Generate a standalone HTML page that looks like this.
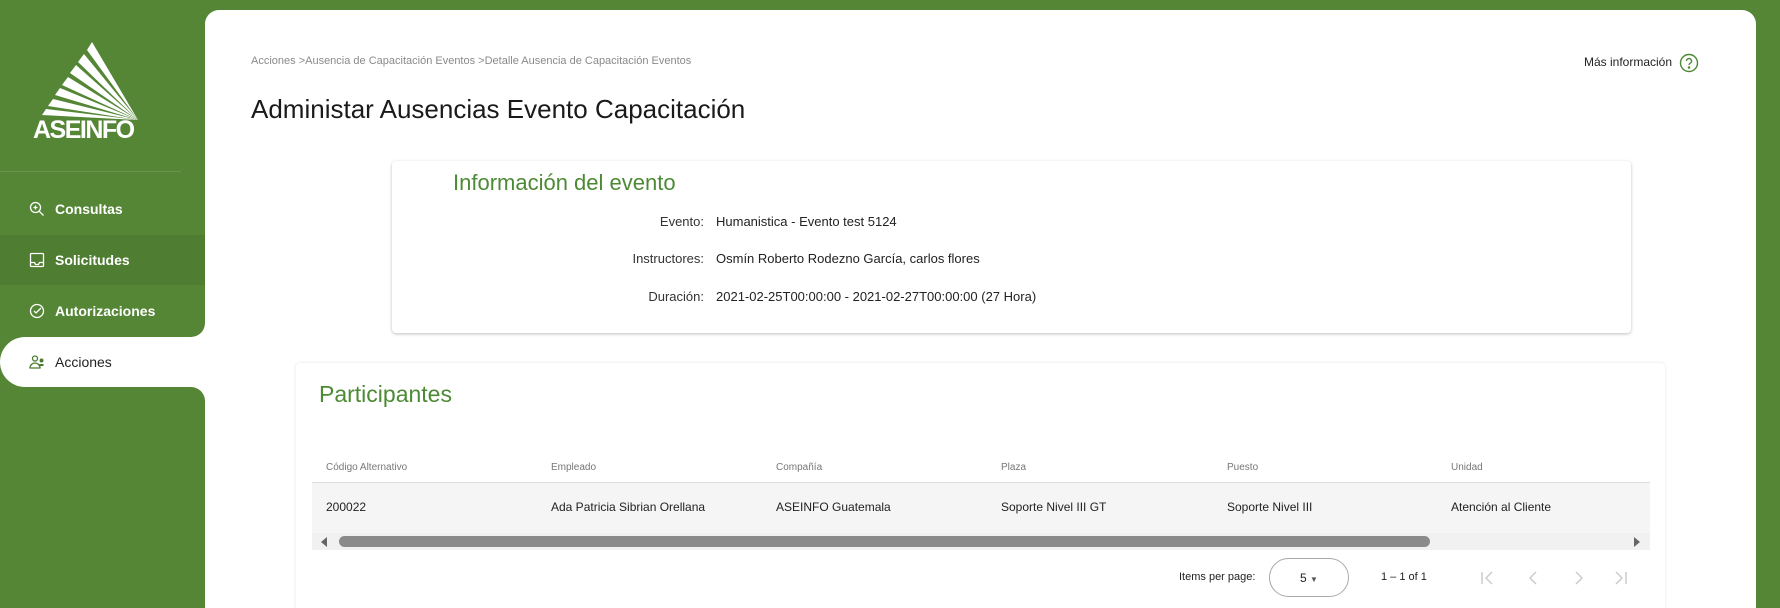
<!DOCTYPE html>
<html><head><meta charset="utf-8"><style>
*{margin:0;padding:0;box-sizing:border-box}
html,body{width:1780px;height:608px;overflow:hidden}
body{background:#558636;font-family:"Liberation Sans",sans-serif;position:relative}
.abs{position:absolute;white-space:nowrap}
.nav{position:absolute;left:0;width:205px;height:50px;color:#fff;font-size:14px;font-weight:bold;display:flex;align-items:center;padding-left:55px}
.nav svg{position:absolute;left:29px}
.card{position:absolute;background:#fff;border-radius:14px 14px 0 0;left:205px;top:10px;width:1551px;height:598px}
.th{position:absolute;top:462px;font-size:10px;color:#777}
.td{position:absolute;top:500px;font-size:12px;color:#222}
.lbl{position:absolute;font-size:13px;color:#333;text-align:right;width:200px;left:504px}
.val{position:absolute;font-size:13px;color:#222;left:716px}
</style></head><body>
<svg class="abs" style="left:30px;top:38px" width="120" height="110" viewBox="30 38 120 110">
<g fill="#fff">
<polygon points="92,42 87,50 138,120"/>
<polygon points="84,54 78,62 138,120"/>
<polygon points="76,65 70,73 138,120"/>
<polygon points="68,77 62,85 138,120"/>
<polygon points="60,88 55,95 138,120"/>
<polygon points="53,99 48,106 138,120"/>
<polygon points="46,109 42,115 138,120"/>
</g>
<text x="33" y="138" fill="#fff" font-size="25" font-weight="bold" font-family="Liberation Sans" letter-spacing="-1.5">ASEINFO</text>
</svg>
<div class="abs" style="left:0;top:171px;width:181px;height:1px;background:rgba(255,255,255,.12)"></div>
<div class="card"></div>
<div class="abs" style="left:180px;top:320px;width:30px;height:80px;background:#fff"></div>
<div class="nav" style="top:184px"><svg width="16" height="16" viewBox="0 0 16 16" fill="none" stroke="#fff" stroke-width="1.3"><circle cx="6.5" cy="6.5" r="5"/><path d="M10.2 10.2L14.5 14.5M6.5 4.5v4M4.5 6.5h4"/></svg>Consultas</div>
<div class="nav" style="top:235px;background:#4f7d31"><svg width="16" height="16" viewBox="0 0 16 16" fill="none" stroke="#fff" stroke-width="1.3"><rect x="1.5" y="1.5" width="13" height="13" rx="1"/><path d="M1.5 10.5h4l1 2h3l1-2h4"/></svg>Solicitudes</div>
<div class="nav" style="top:285px;height:52px;background:#558636;border-radius:0 0 14px 0"><svg width="16" height="16" viewBox="0 0 16 16" fill="none" stroke="#fff" stroke-width="1.3"><circle cx="8" cy="8" r="6.5"/><path d="M5 8l2 2 5-5"/></svg>Autorizaciones</div>
<div class="nav" style="top:337px;height:50px;width:215px;background:#fff;color:#222;font-weight:normal;border-radius:25px 0 0 25px"><svg width="16" height="16" viewBox="0 0 16 16" fill="none" stroke="#4a7a2e" stroke-width="1.3"><circle cx="6" cy="4.5" r="2.5"/><path d="M1 14c0-3 2.5-5 5-5s5 2 5 5z"/><circle cx="12.5" cy="6.5" r="1.3" fill="#4a7a2e"/><path d="M10.5 11h4" stroke-width="2"/></svg>Acciones</div>
<div class="abs" style="left:0;top:387px;width:205px;height:221px;background:#558636;border-radius:0 14px 0 0"></div>
<div class="abs" style="left:251px;top:55px;font-size:11px;color:#8a8a8a">Acciones &gt;Ausencia de Capacitación Eventos &gt;Detalle Ausencia de Capacitación Eventos</div>
<div class="abs" style="left:1584px;top:55px;font-size:12px;color:#222">Más información</div>
<svg class="abs" style="left:1679px;top:53px" width="20" height="20" viewBox="0 0 20 20" fill="none" stroke="#4d8a35" stroke-width="1.4"><circle cx="10" cy="10" r="8.5"/><path d="M7.5 8a2.5 2.5 0 1 1 3.5 2.3c-.7.4-1 .8-1 1.7"/><circle cx="10" cy="14.5" r=".6" fill="#4d8a35"/></svg>
<div class="abs" style="left:251px;top:94px;font-size:26px;color:#1a1a1a">Administar Ausencias Evento Capacitación</div>
<div class="abs" style="left:392px;top:161px;width:1239px;height:172px;background:#fff;border-radius:4px;box-shadow:0 1px 3px rgba(0,0,0,.25)"></div>
<div class="abs" style="left:453px;top:170px;font-size:22px;color:#4d8a35">Información del evento</div>
<div class="lbl" style="top:214px">Evento:</div><div class="val" style="top:214px">Humanistica - Evento test 5124</div>
<div class="lbl" style="top:251px">Instructores:</div><div class="val" style="top:251px">Osmín Roberto Rodezno García, carlos flores</div>
<div class="lbl" style="top:289px">Duración:</div><div class="val" style="top:289px">2021-02-25T00:00:00 - 2021-02-27T00:00:00 (27 Hora)</div>
<div class="abs" style="left:296px;top:363px;width:1369px;height:245px;background:#fff;border-radius:4px 4px 0 0;box-shadow:0 0 3px rgba(0,0,0,.12)"></div>
<div class="abs" style="left:319px;top:381px;font-size:23px;color:#4d8a35">Participantes</div>
<div class="th" style="left:326px">Código Alternativo</div><div class="th" style="left:551px">Empleado</div><div class="th" style="left:776px">Compañía</div><div class="th" style="left:1001px">Plaza</div><div class="th" style="left:1227px">Puesto</div><div class="th" style="left:1451px">Unidad</div>
<div class="abs" style="left:312px;top:482px;width:1338px;height:51px;background:#f5f5f5;border-top:1px solid #ddd"></div>
<div class="td" style="left:326px">200022</div><div class="td" style="left:551px">Ada Patricia Sibrian Orellana</div><div class="td" style="left:776px">ASEINFO Guatemala</div><div class="td" style="left:1001px">Soporte Nivel III GT</div><div class="td" style="left:1227px">Soporte Nivel III</div><div class="td" style="left:1451px">Atención al Cliente</div>
<div class="abs" style="left:312px;top:533px;width:1338px;height:17px;background:#f1f1f1"></div>
<div class="abs" style="left:339px;top:536px;width:1091px;height:11px;background:#8a8a8a;border-radius:6px"></div>
<div class="abs" style="left:321px;top:537px;width:0;height:0;border:5px solid transparent;border-right:6px solid #666;border-left:0"></div>
<div class="abs" style="left:1634px;top:537px;width:0;height:0;border:5px solid transparent;border-left:6px solid #666;border-right:0"></div>
<div class="abs" style="left:1179px;top:571px;font-size:11px;color:#222">Items per page:</div>
<div class="abs" style="left:1269px;top:558px;width:80px;height:39px;border:1px solid #aaa;border-radius:20px;font-size:12px;color:#222;padding:12px 0 0 30px">5 <span style="font-size:8px;color:#555">&#9660;</span></div>
<div class="abs" style="left:1381px;top:571px;font-size:11px;color:#222">1 – 1 of 1</div>
<svg class="abs" style="left:1478px;top:568px" width="160" height="20" viewBox="0 0 160 20" fill="none" stroke="#ccc" stroke-width="1.5"><path d="M4 4v12M14 4l-6 6 6 6M58 4l-6 6 6 6M98 4l6 6-6 6M138 4l6 6-6 6M148 4v12"/></svg>
</body></html>
